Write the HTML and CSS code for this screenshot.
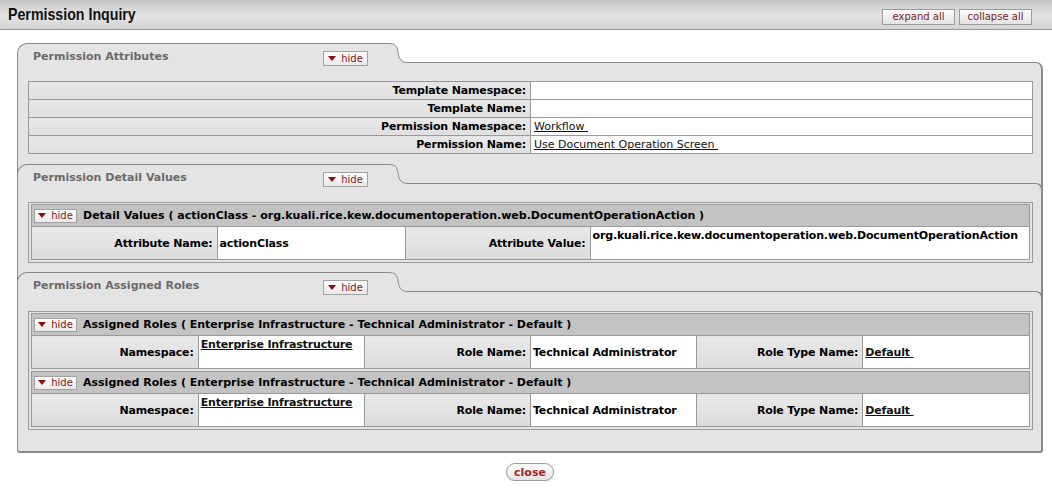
FILE: index.html
```html
<!DOCTYPE html>
<html>
<head>
<meta charset="utf-8">
<title>Permission Inquiry</title>
<link rel="stylesheet" href="styles.css">
</head>
<body>
<header class="topbar">
  <h1 class="page-title">Permission Inquiry</h1>
  <div class="top-actions">
    <button class="tbtn">expand all</button>
    <button class="tbtn">collapse all</button>
  </div>
</header>

<main class="panel">
  <section class="sec first">
    <div class="tabrow">
      <div class="tab-main">
        <span class="tab-title">Permission Attributes</span>
        <button class="hide"><span class="tri"></span>hide</button>
      </div>
      <div class="tab-curve">
        <svg width="20" height="20" viewBox="0 0 20 20"><path d="M0 0.5 C7 0.5 9 2 10 9 C11 16 13 19.5 20 19.5 L20 20 L0 20 Z" fill="#e4e4e4"/><path d="M0 0.5 C7 0.5 9 2 10 9 C11 16 13 19.5 20 19.5" fill="none" stroke="#8a8a8a" stroke-width="1"/></svg>
      </div>
      <div class="tab-fill"></div>
    </div>
    <div class="sec-body">
      <table class="attrs">
        <tr><th>Template Namespace:</th><td></td></tr>
        <tr><th>Template Name:</th><td></td></tr>
        <tr><th>Permission Namespace:</th><td><a class="lnk">Workflow&nbsp;</a></td></tr>
        <tr><th>Permission Name:</th><td><a class="lnk">Use Document Operation Screen&nbsp;</a></td></tr>
      </table>
    </div>
  </section>

  <section class="sec">
    <div class="tabrow">
      <div class="tab-main">
        <span class="tab-title">Permission Detail Values</span>
        <button class="hide"><span class="tri"></span>hide</button>
      </div>
      <div class="tab-curve">
        <svg width="20" height="20" viewBox="0 0 20 20"><path d="M0 0.5 C7 0.5 9 2 10 9 C11 16 13 19.5 20 19.5 L20 20 L0 20 Z" fill="#e4e4e4"/><path d="M0 0.5 C7 0.5 9 2 10 9 C11 16 13 19.5 20 19.5" fill="none" stroke="#8a8a8a" stroke-width="1"/></svg>
      </div>
      <div class="tab-fill"></div>
    </div>
    <div class="sec-body">
      <div class="subgroup">
        <div class="subitem">
          <div class="subhead"><button class="hide small"><span class="tri"></span>hide</button><span>Detail Values ( actionClass - org.kuali.rice.kew.documentoperation.web.DocumentOperationAction )</span></div>
          <table class="subtable detail">
            <colgroup><col class="c1"><col class="c2"><col class="c3"><col></colgroup>
            <tr><th>Attribute Name:</th><td>actionClass</td><th>Attribute Value:</th><td class="top">org.kuali.rice.kew.documentoperation.web.DocumentOperationAction</td></tr>
          </table>
        </div>
      </div>
    </div>
  </section>

  <section class="sec last">
    <div class="tabrow">
      <div class="tab-main">
        <span class="tab-title">Permission Assigned Roles</span>
        <button class="hide"><span class="tri"></span>hide</button>
      </div>
      <div class="tab-curve">
        <svg width="20" height="20" viewBox="0 0 20 20"><path d="M0 0.5 C7 0.5 9 2 10 9 C11 16 13 19.5 20 19.5 L20 20 L0 20 Z" fill="#e4e4e4"/><path d="M0 0.5 C7 0.5 9 2 10 9 C11 16 13 19.5 20 19.5" fill="none" stroke="#8a8a8a" stroke-width="1"/></svg>
      </div>
      <div class="tab-fill"></div>
    </div>
    <div class="sec-body">
      <div class="subgroup">
        <div class="subitem">
          <div class="subhead"><button class="hide small"><span class="tri"></span>hide</button><span>Assigned Roles ( Enterprise Infrastructure - Technical Administrator - Default )</span></div>
          <table class="subtable roles">
            <tr><th>Namespace:</th><td class="top"><a class="lnk">Enterprise Infrastructure</a></td><th>Role Name:</th><td>Technical Administrator</td><th>Role Type Name:</th><td><a class="lnk">Default&nbsp;</a></td></tr>
          </table>
        </div>
        <div class="subitem">
          <div class="subhead"><button class="hide small"><span class="tri"></span>hide</button><span>Assigned Roles ( Enterprise Infrastructure - Technical Administrator - Default )</span></div>
          <table class="subtable roles">
            <tr><th>Namespace:</th><td class="top"><a class="lnk">Enterprise Infrastructure</a></td><th>Role Name:</th><td>Technical Administrator</td><th>Role Type Name:</th><td><a class="lnk">Default&nbsp;</a></td></tr>
          </table>
        </div>
      </div>
    </div>
  </section>
</main>

<div class="footer">
  <button class="close-btn">close</button>
</div>
</body>
</html>
```

FILE: styles.css
```css
html, body {
  margin: 0;
  padding: 0;
  background: #fff;
}
body {
  font-family: "DejaVu Sans", Verdana, sans-serif;
  font-size: 11px;
  color: #000;
}
button {
  font-family: "DejaVu Sans", Verdana, sans-serif;
  cursor: pointer;
}

/* ---------- top bar ---------- */
.topbar {
  display: flex;
  justify-content: space-between;
  height: 29px;
  padding: 0 20px 0 8px;
  border-bottom: 1px solid #9a9a9a;
  background: linear-gradient(180deg, #c4c4c4 0%, #d9d9d9 35%, #e3e3e3 60%, #d2d2d2 100%);
}
.page-title {
  margin: 0;
  align-self: center;
  font-family: "Liberation Sans", Arial, sans-serif;
  font-weight: bold;
  font-size: 16.5px;
  color: #111;
  transform: scaleX(0.86);
  transform-origin: left center;
}
.top-actions {
  display: flex;
  gap: 4px;
  margin-top: 9px;
  align-self: flex-start;
}
.tbtn {
  width: 73px;
  height: 16px;
  padding: 0;
  border: 1px solid #9c9c9c;
  background: linear-gradient(180deg, #fbfbfb, #e4e4e4);
  font-size: 10px;
  color: #7a1d1d;
  line-height: 14px;
}

/* ---------- panel ---------- */
.panel {
  margin: 13px 0 0 17px;
  width: 1026px;
}
.tabrow {
  display: flex;
  height: 26px;
  border-left: 1px solid #8a8a8a;
  border-right: 2px solid #8a8a8a;
  background: #e4e4e4;
}
.sec.first .tabrow {
  border-color: transparent;
  background: transparent;
}
.tab-main {
  box-sizing: border-box;
  width: 371px;
  margin-left: -1px;
  display: flex;
  align-items: flex-start;
  padding: 6px 20px 0 15px;
  border-top: 1px solid #8a8a8a;
  border-left: 1px solid #8a8a8a;
  border-top-left-radius: 10px;
  background: #e4e4e4;
}
.tab-title {
  font-weight: bold;
  font-size: 11px;
  color: #6a6a6a;
  line-height: 14px;
}
.tab-main .hide {
  margin-left: auto;
  margin-top: 1px;
}
.tab-curve {
  width: 20px;
  display: flex;
  flex-direction: column;
}
.tab-curve svg {
  display: block;
  flex: 0 0 20px;
}
.tab-curve::after {
  content: "";
  flex: 1;
  background: #e4e4e4;
}
.tab-fill {
  flex: 1;
  margin-top: 19px;
  margin-right: -2px;
  border-top: 1px solid #8a8a8a;
  border-right: 2px solid #8a8a8a;
  border-top-right-radius: 8px;
  background: #e4e4e4;
}
.sec-body {
  border-left: 1px solid #8a8a8a;
  border-right: 2px solid #8a8a8a;
  background: #e4e4e4;
  padding: 12px 8px 9px 10px;
}
.sec.first .sec-body {
  padding-bottom: 10px;
}
.sec.last .sec-body {
  padding-top: 13px;
  padding-bottom: 21px;
  border-bottom: 2px solid #8a8a8a;
  border-bottom-left-radius: 3px;
  border-bottom-right-radius: 3px;
}

/* ---------- hide buttons ---------- */
.hide {
  display: inline-flex;
  align-items: center;
  justify-content: center;
  gap: 5px;
  box-sizing: border-box;
  width: 45px;
  height: 15px;
  padding: 0;
  border: 1px solid #a2a2a2;
  background: linear-gradient(180deg, #fdfdfd, #e9e9e9);
  font-size: 10px;
  color: #861616;
  line-height: 13px;
}
.hide.small {
  width: 43px;
  height: 14px;
}
.tri {
  width: 0;
  height: 0;
  border-left: 4px solid transparent;
  border-right: 4px solid transparent;
  border-top: 5px solid #8e0b0b;
}

/* ---------- attribute table ---------- */
.attrs {
  width: 100%;
  border-collapse: collapse;
  table-layout: fixed;
  border: 1px solid #9a9a9a;
}
.attrs th,
.attrs td {
  height: 17px;
  padding: 0;
  border: 1px solid #9a9a9a;
  line-height: 17px;
  font-size: 11px;
}
.attrs th {
  width: 497px;
  text-align: right;
  padding-right: 4px;
  letter-spacing: -0.15px;
  background: linear-gradient(180deg, #e8e8e8, #dfdfdf);
}
.attrs td {
  background: #fff;
  padding-left: 3px;
}
.lnk {
  color: #111;
  text-decoration: underline;
}

/* ---------- sub groups ---------- */
.subgroup {
  border: 1px solid #9a9a9a;
  padding: 1px 2px 2px;
}
.subitem {
  border: 1px solid #9a9a9a;
}
.subitem + .subitem {
  margin-top: 2px;
}
.subhead {
  display: flex;
  align-items: center;
  gap: 6px;
  height: 21px;
  padding-left: 2px;
  background: #c3c3c3;
  font-weight: bold;
  font-size: 11px;
}
.subtable {
  width: 100%;
  border-collapse: collapse;
  table-layout: fixed;
}
.subtable th,
.subtable td {
  height: 30px;
  padding: 0;
  border-top: 1px solid #9a9a9a;
  border-left: 1px solid #9a9a9a;
  font-weight: bold;
  font-size: 11px;
  letter-spacing: -0.15px;
}
.subtable tr > :first-child {
  border-left: none;
}
.subtable th {
  text-align: right;
  padding-right: 4px;
  background: linear-gradient(180deg, #e9e9e9, #dcdcdc);
}
.subtable td {
  background: #fff;
  padding-left: 2px;
  text-align: left;
}
.subtable td.top {
  vertical-align: top;
  padding-top: 2px;
}
.detail col.c1 { width: 185px; }
.detail col.c2 { width: 188px; }
.detail col.c3 { width: 185px; }

/* ---------- footer ---------- */
.footer {
  width: 1026px;
  margin-left: 17px;
  padding-top: 10px;
  text-align: center;
}
.close-btn {
  width: 48px;
  height: 18px;
  padding: 0;
  border: 1px solid #9a9a9a;
  border-radius: 9px;
  background: linear-gradient(180deg, #ffffff, #e4e4e4);
  box-shadow: 0 1px 1px rgba(0, 0, 0, 0.15);
  font-weight: bold;
  font-size: 11px;
  color: #a32626;
  line-height: 15px;
}
```
